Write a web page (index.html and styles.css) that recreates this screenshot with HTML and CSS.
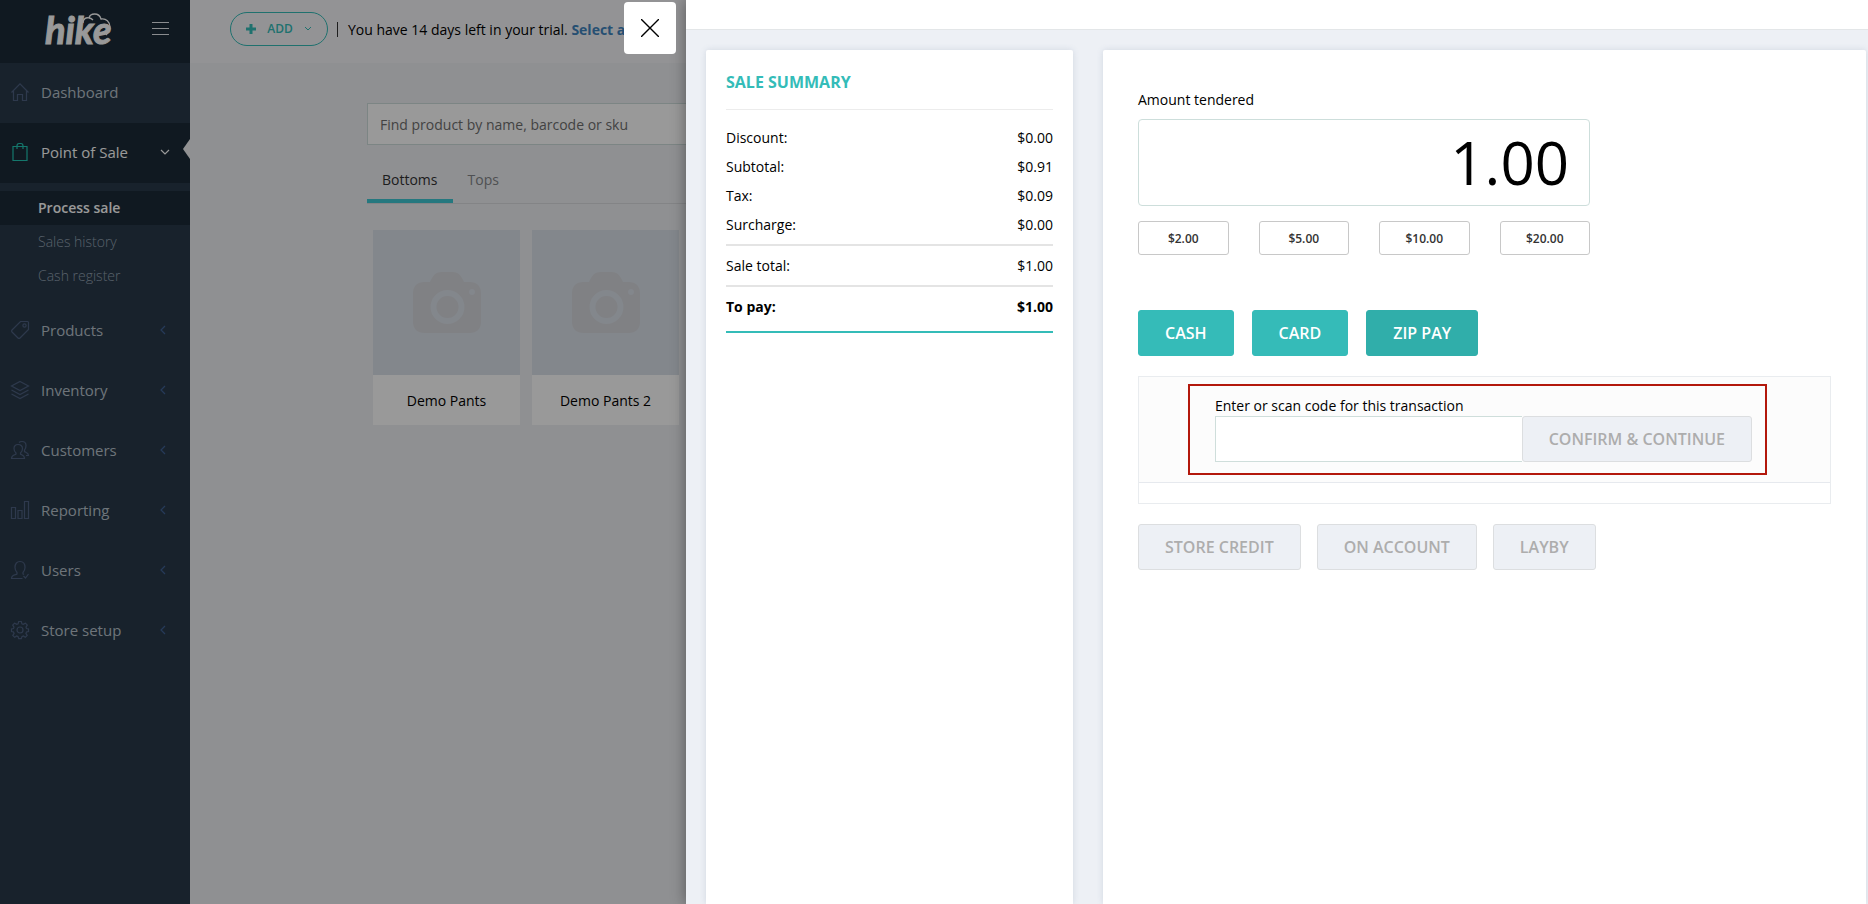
FILE: index.html
```html
<!DOCTYPE html>
<html lang="en">
<head>
<meta charset="utf-8">
<title>Hike - Process sale</title>
<link rel="stylesheet" href="styles.css">
</head>
<body>
<div class="app">
  <nav class="sidebar">
    <div class="brand">
      <svg class="logo" width="70" height="36" viewBox="0 0 70 36" role="img" aria-label="hike">
        <text x="2" y="32" class="logo-text">hike</text>
        <path d="M40 11c0-4 3-6 6-5 1-5 10-6 12 1 5-1 9 3 9 8 0 4-2 6-4 8M46 6c2 0 3 1 4 2" fill="none" stroke="#fff" stroke-width="1.300"/>
      </svg>
      <button class="menu-btn" aria-label="Menu"><span></span><span></span><span></span></button>
    </div>
    <a class="nav-item" href="#"><svg class="ico" viewBox="0 0 18 18"><path d="M.5 9.500 9 .8l8.500 8.700M2.500 8v9.500h4v-6h5v6h4V8"/></svg><span>Dashboard</span></a>
    <a class="nav-item current" href="#"><svg class="ico" viewBox="0 0 18 18"><path d="M2 3.500h14v14H2zM6 6V3q0-2.500 2-2.500h2q2 0 2 2.500v3"/></svg><span>Point of Sale</span><svg class="chev down" viewBox="0 0 10 10"><path d="M1 3l4 4 4-4"/></svg></a>
    <div class="subnav">
      <a class="sub-item on" href="#">Process sale</a>
      <a class="sub-item" href="#">Sales history</a>
      <a class="sub-item" href="#">Cash register</a>
    </div>
    <a class="nav-item" href="#"><svg class="ico" viewBox="0 0 18 18"><path d="M9.500.5h7q1 0 1 1v7l-8.500 8.500q-1 1-2 0l-6-6q-1-1 0-2z"/><circle cx="13.500" cy="4.500" r="1.600"/></svg><span>Products</span><svg class="chev" viewBox="0 0 10 10"><path d="M7 1L3 5l4 4"/></svg></a>
    <a class="nav-item" href="#"><svg class="ico" viewBox="0 0 18 18"><path d="M9 .5l8.500 4.500L9 9.500.5 5zM.5 9L9 13.500 17.500 9M.5 13L9 17.500 17.500 13"/></svg><span>Inventory</span><svg class="chev" viewBox="0 0 10 10"><path d="M7 1L3 5l4 4"/></svg></a>
    <a class="nav-item" href="#"><svg class="ico" viewBox="0 0 18 18"><path d="M7 3.500c-3 0-4 2-4 4 0 2 .8 3.500 2 4.500v1C4 14 .5 14 .5 17.500h13c0-3.500-3-3.500-4-4.500v-1c1.200-1 2-2.500 2-4.500 0-2-1.500-4-4.500-4zM8 1.500c1-1 2-1 3-1 3 0 4 2 4 4 0 2-.5 3.500-1.500 4.500v1.500c1 1 4 1 4 4H15"/></svg><span>Customers</span><svg class="chev" viewBox="0 0 10 10"><path d="M7 1L3 5l4 4"/></svg></a>
    <a class="nav-item" href="#"><svg class="ico" viewBox="0 0 18 18"><path d="M.5 6.500h4v11h-4zM7 9.500h4v8H7zM13.500.5h4v17h-4z"/></svg><span>Reporting</span><svg class="chev" viewBox="0 0 10 10"><path d="M7 1L3 5l4 4"/></svg></a>
    <a class="nav-item" href="#"><svg class="ico" viewBox="0 0 18 18"><path d="M11.500 17.500H.5C.5 13.500 5 14 6 13v-1.500C5 10.500 4 9 4 6.500c0-4 2-6 5-6s5 2 5 6c0 2.500-1 4-2 5V13l1 .6M12.500 15l2 2 3-4"/></svg><span>Users</span><svg class="chev" viewBox="0 0 10 10"><path d="M7 1L3 5l4 4"/></svg></a>
    <a class="nav-item" href="#"><svg class="ico" viewBox="0 0 18 18"><path d="M7.700.5h2.600l.6 2.400 1.300.5L14.400 2.200l1.900 1.900-1.300 2 .5 1.500 2 .4v2.500l-2 .5-.6 1.400 1.300 2-1.900 1.900-2-1.300-1.400.6-.6 2H7.700l-.6-2-1.400-.6-2 1.300-1.900-1.900 1.300-2-.6-1.400-2-.5V8l2-.4.5-1.500-1.300-2 1.900-1.900 2.200 1.200 1.300-.5z"/><circle cx="9" cy="9" r="3"/></svg><span>Store setup</span><svg class="chev" viewBox="0 0 10 10"><path d="M7 1L3 5l4 4"/></svg></a>
  </nav>
  <div class="workspace">
    <header class="topbar">
      <button class="add-btn"><svg width="10" height="10" viewBox="0 0 10 10"><path d="M5 0v10M0 5h10" stroke="currentColor" stroke-width="3"/></svg><span>ADD</span><svg width="8" height="6" viewBox="0 0 8 6"><path d="M1 1l3 3 3-3" fill="none" stroke="currentColor"/></svg></button>
      <p class="trial">You have 14 days left in your trial. <a href="#">Select a plan</a></p>
    </header>
    <main class="catalog">
      <input class="search" type="text" placeholder="Find product by name, barcode or sku" aria-label="Find product">
      <div class="tabs"><button class="tab on">Bottoms</button><button class="tab">Tops</button></div>
      <div class="products">
        <article class="product"><div class="photo"><svg width="70" height="61" viewBox="0 0 70 61"><path class="cam" d="M13 10h5c3-6 5-10 12-10h10c7 0 9 4 12 10h5q12 0 12 12v27q0 12-12 12H13Q1 61 1 49V22q0-12 12-12z"/><circle class="lens" cx="35.500" cy="35" r="14"/><circle class="dot" cx="60" cy="20" r="3"/></svg></div><h3>Demo Pants</h3></article>
        <article class="product"><div class="photo"><svg width="70" height="61" viewBox="0 0 70 61"><path class="cam" d="M13 10h5c3-6 5-10 12-10h10c7 0 9 4 12 10h5q12 0 12 12v27q0 12-12 12H13Q1 61 1 49V22q0-12 12-12z"/><circle class="lens" cx="35.500" cy="35" r="14"/><circle class="dot" cx="60" cy="20" r="3"/></svg></div><h3>Demo Pants 2</h3></article>
      </div>
    </main>
  </div>
</div>
<div class="overlay"></div>
<section class="drawer">
  <button class="close" aria-label="Close"><svg width="18" height="18" viewBox="0 0 18 18"><path d="M0 0l18 18M18 0L0 18" stroke="#000" stroke-width="1.400"/></svg></button>
  <div class="drawer-head"></div>
  <div class="drawer-body">
    <section class="card summary">
      <h2>SALE SUMMARY</h2>
      <table>
        <tr><th scope="row">Discount:</th><td>$0.00</td></tr>
        <tr><th scope="row">Subtotal:</th><td>$0.91</td></tr>
        <tr><th scope="row">Tax:</th><td>$0.09</td></tr>
        <tr class="last"><th scope="row">Surcharge:</th><td>$0.00</td></tr>
        <tr class="total"><th scope="row">Sale total:</th><td>$1.00</td></tr>
        <tr class="total pay"><th scope="row">To pay:</th><td>$1.00</td></tr>
      </table>
    </section>
    <section class="card payment">
      <div class="tender">
        <label for="amount">Amount tendered</label>
        <input id="amount" type="text" value="1.00">
        <div class="quick"><button>$2.00</button><button>$5.00</button><button>$10.00</button><button>$20.00</button></div>
      </div>
      <div class="methods"><button class="btn teal">CASH</button><button class="btn teal">CARD</button><button class="btn teal active">ZIP PAY</button></div>
      <div class="panel">
        <div class="panel-main">
          <form class="code-box">
            <label for="code">Enter or scan code for this transaction</label>
            <div class="code-row"><input id="code" type="text"><button type="button" class="btn muted">CONFIRM &amp; CONTINUE</button></div>
          </form>
        </div>
        <div class="panel-foot"></div>
      </div>
      <div class="others"><button class="btn muted">STORE CREDIT</button><button class="btn muted">ON ACCOUNT</button><button class="btn muted">LAYBY</button></div>
    </section>
  </div>
</section>
</body>
</html>
```

FILE: styles.css
```css
* { box-sizing: border-box; }
body {
  margin: 0;
  height: 100vh;
  overflow: hidden;
  position: relative;
  font: 14px/20px "Open Sans", "Noto Sans", sans-serif;
  color: #000;
  background: #eef0f3;
}
button, input { font: inherit; color: inherit; margin: 0; }
button { cursor: pointer; }
a { text-decoration: none; color: inherit; }
h2, h3, p { margin: 0; }

.app { display: flex; min-height: 100vh; }
.sidebar { width: 190px; flex: none; background: #293a4a; }
.brand {
  height: 63px;
  padding: 0 21px 0 43px;
  display: flex;
  align-items: center;
  justify-content: space-between;
  background: #1b2b38;
}
.logo { margin-bottom: 4px; overflow: visible; }
.logo-text { font: italic bold 38px "Liberation Sans Narrow", Lato, sans-serif; fill: #fff; stroke: #fff; stroke-width: 1; }
.menu-btn {
  width: 17px;
  padding: 0;
  border: 0;
  background: none;
  display: grid;
  gap: 5px;
  margin-bottom: 6px;
}
.menu-btn span { height: 1px; background: #e6eaee; }
.nav-item {
  position: relative;
  height: 60px;
  padding: 0 22px 2px 11px;
  display: flex;
  align-items: center;
  gap: 12px;
  font-size: 15px;
  color: #b8c2cc;
}
.ico { width: 18px; height: 18px; fill: none; stroke: #4d6080; stroke-width: 1.2; overflow: visible; }
.chev { width: 10px; height: 10px; margin-left: auto; fill: none; stroke: #3f6296; stroke-width: 1.2; }
.current { background: #1b2b38; color: #fff; padding-right: 20px; }
.current .ico { stroke: #22c7b4; }
.current .chev { stroke: #fff; }
.current::after {
  content: "";
  position: absolute;
  right: 0;
  top: 16px;
  border: solid transparent;
  border-width: 10px 7px 10px 0;
  border-right-color: #f3f4f6;
}
.subnav { padding: 8px 0; }
.sub-item { display: block; height: 34px; padding-left: 38px; line-height: 34px; color: #94a2b2; font-weight: 300; }
.sub-item.on { background: #1b2b38; color: #fff; font-weight: 600; }

.workspace { flex: 1; min-width: 0; }
.topbar {
  height: 63px;
  padding: 0 40px 5px;
  display: flex;
  align-items: center;
  gap: 9px;
  background: #f5f6f9;
}
.add-btn {
  width: 98px;
  height: 34px;
  border: 1px solid #34bcb8;
  border-radius: 17px;
  background: none;
  color: #34bcb8;
  display: flex;
  align-items: center;
  justify-content: center;
  gap: 11px;
  font-size: 12px;
  font-weight: 600;
}
.trial { border-left: 1px solid #333; padding-left: 10px; line-height: 15px; white-space: nowrap; }
.trial a { color: #4084bf; font-weight: bold; }
.catalog { padding: 40px 40px 40px 177px; }
.search {
  display: block;
  width: 100%;
  height: 42px;
  padding: 0 12px;
  border: 1px solid #cfdedd;
  border-radius: 0;
  background: #fff;
}
.search::placeholder { color: #6f6f6f; opacity: 1; }
.tabs { display: flex; margin-top: 13px; border-bottom: 1px solid #dadcdf; }
.tab {
  height: 45px;
  padding: 2px 15px 0;
  border: 0;
  border-bottom: 4px solid transparent;
  background: none;
  color: #84868a;
}
.tab.on { color: #333; border-color: #3fc8d4; }
.products { display: grid; grid-template-columns: repeat(auto-fill, 147px); gap: 12px; padding: 26px 6px; }
.product { background: #fff; }
.photo { height: 145px; display: flex; align-items: center; justify-content: center; background: #dbe1e9; }
.cam { fill: #d5d7dc; }
.lens { fill: none; stroke: #dbe1e9; stroke-width: 6; }
.dot { fill: #dbe1e9; }
.product h3 { padding: 16px 0 14px; font-size: 14px; font-weight: 400; line-height: 20px; text-align: center; }

.overlay { position: absolute; inset: 0; background: rgba(0, 0, 0, 0.4); }
.drawer {
  position: absolute;
  inset: 0 0 0 686px;
  display: flex;
  flex-direction: column;
  background: #edf0f5;
  box-shadow: 0 0 14px rgba(0, 0, 0, 0.4);
}
.close {
  position: absolute;
  left: -62px;
  top: 2px;
  width: 52px;
  height: 52px;
  padding: 0;
  display: grid;
  place-items: center;
  border: 0;
  border-radius: 4px;
  background: #fff;
}
.drawer-head { height: 30px; flex: none; background: #fff; border-bottom: 1px solid #e3e6e8; }
.drawer-body { flex: 1; display: flex; gap: 30px; padding: 20px 2px 0 20px; }
.card { background: #fff; border-radius: 2px 2px 0 0; box-shadow: 0 0 6px rgba(100, 120, 150, 0.2); }
.summary { width: 367px; flex: none; padding: 20px; }
.summary h2 {
  height: 40px;
  border-bottom: 1px solid #ececec;
  font-size: 16px;
  line-height: 24px;
  font-weight: 700;
  color: #34bcb8;
}
.summary table { width: 100%; margin-top: 13px; border-collapse: separate; border-spacing: 0; border-bottom: 2px solid #34bcb8; }
.summary th, .summary td { height: 29px; padding: 0; font-weight: 400; text-align: left; }
.summary td { text-align: right; }
.summary .last th, .summary .last td { height: 34px; padding-bottom: 5px; }
.summary .total th, .summary .total td { height: 41px; border-top: 2px solid #e4e4e4; }
.summary .pay th, .summary .pay td { height: 46px; padding-bottom: 4px; font-weight: 700; }

.payment { flex: 1; min-width: 0; padding: 40px 35px; }
.tender { max-width: 452px; }
.tender label { display: block; margin-bottom: 9px; }
#amount {
  display: block;
  width: 100%;
  height: 87px;
  padding: 0 20px 2px;
  border: 1px solid #cddedb;
  border-radius: 4px;
  font-size: 60px;
  text-align: right;
}
.quick { display: grid; grid-template-columns: repeat(4, 1fr); gap: 30px; margin-top: 15px; }
.quick button {
  height: 34px;
  padding: 1px 0 0;
  border: 1px solid #c8c8c8;
  border-radius: 3px;
  background: #fff;
  color: #333;
  font-size: 12px;
  font-weight: 600;
}
.methods { display: flex; gap: 18px; margin-top: 55px; }
.btn {
  height: 46px;
  padding: 0 26px;
  border: 1px solid transparent;
  border-radius: 3px;
  font-size: 16px;
  font-weight: 600;
  white-space: nowrap;
}
.teal { background: #35bbb8; border-color: #35bbb8; color: #fff; }
.teal.active { background: #30aeaa; border-color: #30aeaa; }
.muted { background: #edf0f5; border-color: #dcdee0; color: #adadad; }
.panel { margin-top: 20px; border: 1px solid #e9ecef; }
.panel-main { padding: 7px 63px 7px 49px; background: #fcfcfc; border-bottom: 1px solid #e6e9ee; }
.code-box { padding: 10px 13px 11px 25px; border: 2px solid #b3180c; }
.code-box label { display: block; }
.code-row { display: flex; }
.code-row input { flex: 1; min-width: 0; height: 46px; border: 1px solid #cfdedb; border-right: 0; border-radius: 0; padding: 0 12px; background: #fff; }
.panel-foot { height: 20px; }
.others { display: flex; gap: 16px; margin-top: 20px; }
```
